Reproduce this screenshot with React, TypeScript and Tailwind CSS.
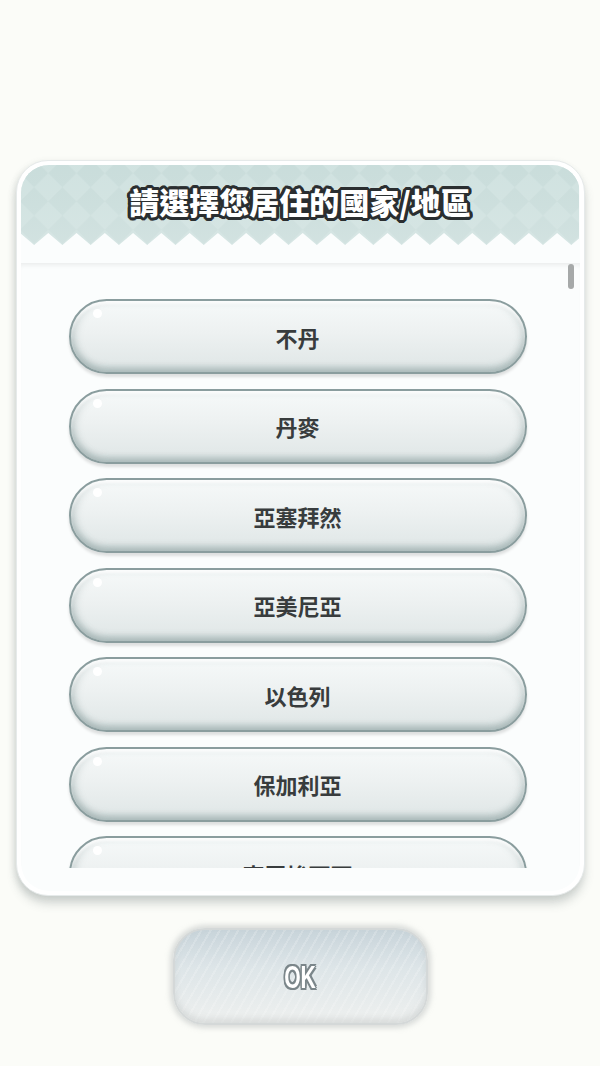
import React from "react";

const ITEMS = ["不丹", "丹麥", "亞塞拜然", "亞美尼亞", "以色列", "保加利亞", "克羅埃西亞"];

function Item({ label }: { label: string }) {
  return (
    <div className="relative flex h-[75px] w-[458px] shrink-0 items-center justify-center rounded-full border-2 border-[#8a9d9e] bg-[linear-gradient(to_bottom,#f6f9f9_0%,#edf1f1_45%,#dfe6e6_100%)] shadow-[inset_0_-5px_6px_rgba(110,135,135,0.35),inset_0_3px_3px_rgba(255,255,255,0.95),inset_5px_0_7px_rgba(140,160,160,0.25),inset_-5px_0_7px_rgba(140,160,160,0.2),0_3px_3px_rgba(0,0,0,0.12)]">
      <span className="absolute left-[22px] top-[8px] h-[9px] w-[9px] rounded-full bg-white blur-[0.5px]" />
      <span className="text-[22px] font-bold leading-none text-[#383c3d]">{label}</span>
    </div>
  );
}

function HeaderArt() {
  let d = "M0 80 ";
  const p = 28.27;
  for (let k = -1; k < 22; k++) {
    const peak = -1 + k * p;
    d += `L${peak - p / 2} 80 L${peak} 68 `;
  }
  d += "L560 80 Z";
  return (
    <svg className="absolute inset-0" width="558" height="80" viewBox="0 0 558 80">
      <defs>
        <pattern id="dia" x="-1" y="-6" width="28.27" height="28.27" patternUnits="userSpaceOnUse">
          <path d="M14.13 0 L28.27 14.13 L14.13 28.27 L0 14.13 Z" fill="#c7dbd9" />
        </pattern>
        <linearGradient id="fade" x1="0" y1="0" x2="0" y2="1">
          <stop offset="0" stopColor="#d3e4e2" stopOpacity="0.2" />
          <stop offset="1" stopColor="#dde9e8" stopOpacity="0.5" />
        </linearGradient>
      </defs>
      <rect x="0" y="0" width="558" height="80" fill="#d0e2e0" />
      <rect x="0" y="0" width="558" height="80" fill="url(#dia)" />
      <rect x="0" y="0" width="558" height="80" fill="url(#fade)" />
      <path d={d} fill="#fbfdfd" />
    </svg>
  );
}

export default function App() {
  return (
    <div className="flex h-[1066px] w-[600px] flex-col items-center bg-[#fbfcf8] pt-[160px] font-['Noto_Sans_CJK_TC','Noto_Sans',sans-serif]">
      <div className="h-[736px] w-[569px] rounded-[32px] border border-[#e6eaea] bg-white p-[4px] shadow-[0_8px_10px_rgba(80,95,95,0.22),-2px_2px_6px_rgba(80,95,95,0.12)]">
        <div className="flex h-full flex-col overflow-hidden rounded-[28px] bg-[#fbfdfd]">
          <div className="relative h-[80px] shrink-0">
            <HeaderArt />
            <div className="relative flex h-[72px] items-center justify-center">
              <span className="text-[30px] font-black leading-none text-white [text-shadow:3px_0_0_#2a2e30,-3px_0_0_#2a2e30,0_3px_0_#2a2e30,0_-3px_0_#2a2e30,2px_2px_0_#2a2e30,-2px_2px_0_#2a2e30,2px_-2px_0_#2a2e30,-2px_-2px_0_#2a2e30,3px_1px_0_#2a2e30,-3px_1px_0_#2a2e30,3px_-1px_0_#2a2e30,-3px_-1px_0_#2a2e30,1px_3px_0_#2a2e30,-1px_3px_0_#2a2e30,1px_-3px_0_#2a2e30,-1px_-3px_0_#2a2e30]">
                請選擇您居住的國家/地區
              </span>
            </div>
          </div>
          <div className="h-[18px] shrink-0" />
          <div className="relative h-[605px] shrink-0 overflow-hidden shadow-[inset_0_5px_5px_-3px_rgba(0,0,0,0.07)]">
            <div className="absolute right-[6px] top-[1px] h-[25px] w-[6px] rounded-full bg-[#a6a9a9]" />
            <div className="flex flex-col gap-[14.5px] pl-[48px] pt-[36px]">
              {ITEMS.map((it) => (
                <Item key={it} label={it} />
              ))}
            </div>
          </div>
        </div>
      </div>
      <div className="mt-[32px] flex h-[97px] w-[255px] items-center justify-center rounded-[32px] border-2 border-[#d4d8d8] bg-[repeating-linear-gradient(120deg,rgba(255,255,255,0)_0px,rgba(255,255,255,0)_6px,rgba(255,255,255,0.18)_6px,rgba(255,255,255,0.18)_8px),linear-gradient(to_bottom,#c8d4da_0%,#dde5e8_40%,#eef0ef_100%)] shadow-[0_0_5px_3px_rgba(185,190,190,0.5),inset_0_-4px_6px_rgba(175,180,180,0.35)]">
        <span className="inline-block scale-x-[0.66] font-['Liberation_Sans',sans-serif] text-[32px] font-bold leading-none text-white [text-shadow:2px_0_0_#7b868a,-2px_0_0_#7b868a,0_2px_0_#7b868a,0_-2px_0_#7b868a,2px_2px_0_#7b868a,-2px_2px_0_#7b868a,2px_-2px_0_#7b868a,-2px_-2px_0_#7b868a]">
          OK
        </span>
      </div>
    </div>
  );
}
